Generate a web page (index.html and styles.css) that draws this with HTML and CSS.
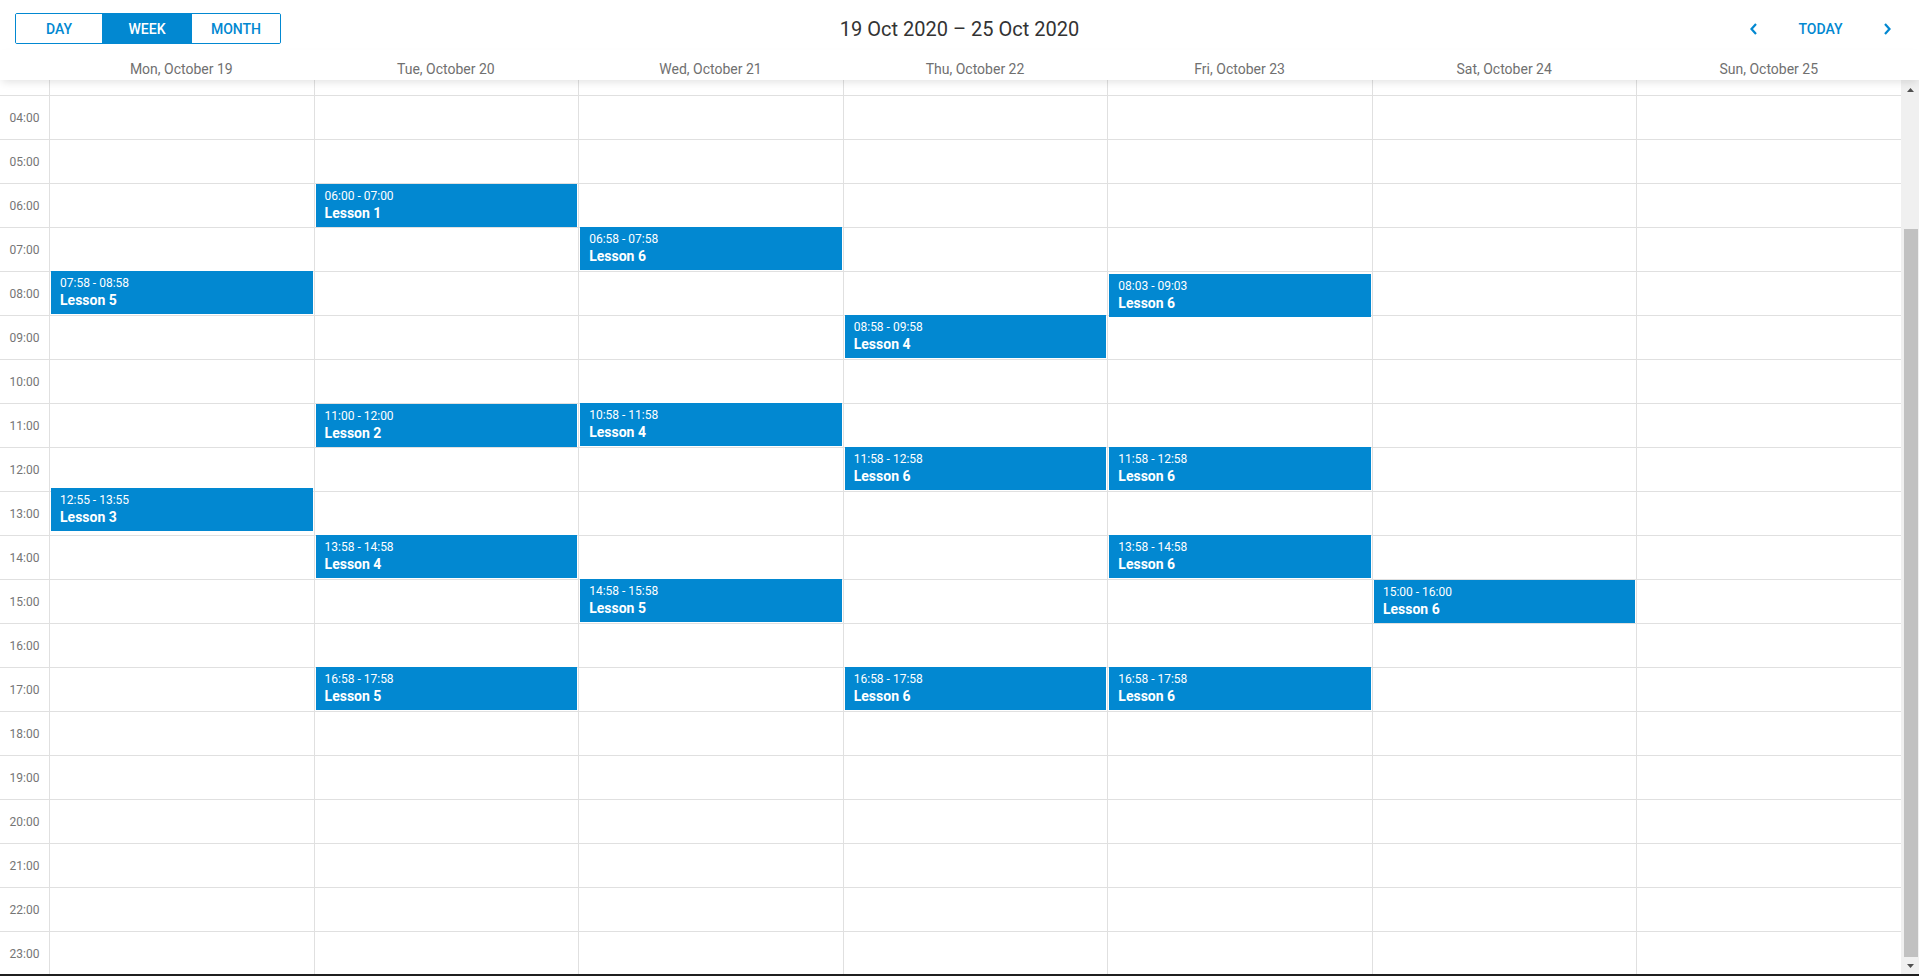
FILE: index.html
```html
<!DOCTYPE html>
<html lang="en">
<head>
<meta charset="utf-8">
<title>Scheduler</title>
<link rel="stylesheet" href="styles.css">
</head>
<body>
<div class="scheduler">
  <div class="toolbar">
    <div class="tb-left">
      <div class="view-switcher">
        <button class="view-btn btn-day">DAY</button>
        <button class="view-btn btn-week active">WEEK</button>
        <button class="view-btn btn-month">MONTH</button>
      </div>
    </div>
    <div class="tb-title">19 Oct 2020 – 25 Oct 2020</div>
    <div class="tb-right">
      <button class="nav-btn" aria-label="Previous"><svg width="10" height="12" viewBox="0 0 10 12"><polyline points="7,1 2.5,6 7,11" fill="none" stroke="#0288d1" stroke-width="2.2"/></svg></button>
      <button class="today-btn">TODAY</button>
      <button class="nav-btn" aria-label="Next"><svg width="10" height="12" viewBox="0 0 10 12"><polyline points="3,1 7.5,6 3,11" fill="none" stroke="#0288d1" stroke-width="2.2"/></svg></button>
    </div>
  </div>

  <div class="header">
    <div class="header-spacer"></div>
    <div class="header-cell">Mon, October 19</div>
    <div class="header-cell">Tue, October 20</div>
    <div class="header-cell">Wed, October 21</div>
    <div class="header-cell">Thu, October 22</div>
    <div class="header-cell">Fri, October 23</div>
    <div class="header-cell">Sat, October 24</div>
    <div class="header-cell">Sun, October 25</div>
    <div class="header-scroll-spacer"></div>
  </div>

  <div class="body">
    <div class="grid">
      <div class="time-col">
        <div class="time-cell partial"></div>
        <div class="time-cell">04:00</div>
        <div class="time-cell">05:00</div>
        <div class="time-cell">06:00</div>
        <div class="time-cell">07:00</div>
        <div class="time-cell">08:00</div>
        <div class="time-cell">09:00</div>
        <div class="time-cell">10:00</div>
        <div class="time-cell">11:00</div>
        <div class="time-cell">12:00</div>
        <div class="time-cell">13:00</div>
        <div class="time-cell">14:00</div>
        <div class="time-cell">15:00</div>
        <div class="time-cell">16:00</div>
        <div class="time-cell">17:00</div>
        <div class="time-cell">18:00</div>
        <div class="time-cell">19:00</div>
        <div class="time-cell">20:00</div>
        <div class="time-cell">21:00</div>
        <div class="time-cell">22:00</div>
        <div class="time-cell">23:00</div>
      </div>

      <div class="day-col">
        <div class="appt" style="top:191px"><div class="appt-time">07:58 - 08:58</div><div class="appt-title">Lesson 5</div></div>
        <div class="appt" style="top:408px"><div class="appt-time">12:55 - 13:55</div><div class="appt-title">Lesson 3</div></div>
      </div>
      <div class="day-col">
        <div class="appt" style="top:104px"><div class="appt-time">06:00 - 07:00</div><div class="appt-title">Lesson 1</div></div>
        <div class="appt" style="top:324px"><div class="appt-time">11:00 - 12:00</div><div class="appt-title">Lesson 2</div></div>
        <div class="appt" style="top:455px"><div class="appt-time">13:58 - 14:58</div><div class="appt-title">Lesson 4</div></div>
        <div class="appt" style="top:587px"><div class="appt-time">16:58 - 17:58</div><div class="appt-title">Lesson 5</div></div>
      </div>
      <div class="day-col">
        <div class="appt" style="top:147px"><div class="appt-time">06:58 - 07:58</div><div class="appt-title">Lesson 6</div></div>
        <div class="appt" style="top:323px"><div class="appt-time">10:58 - 11:58</div><div class="appt-title">Lesson 4</div></div>
        <div class="appt" style="top:499px"><div class="appt-time">14:58 - 15:58</div><div class="appt-title">Lesson 5</div></div>
      </div>
      <div class="day-col">
        <div class="appt" style="top:235px"><div class="appt-time">08:58 - 09:58</div><div class="appt-title">Lesson 4</div></div>
        <div class="appt" style="top:367px"><div class="appt-time">11:58 - 12:58</div><div class="appt-title">Lesson 6</div></div>
        <div class="appt" style="top:587px"><div class="appt-time">16:58 - 17:58</div><div class="appt-title">Lesson 6</div></div>
      </div>
      <div class="day-col">
        <div class="appt" style="top:194px"><div class="appt-time">08:03 - 09:03</div><div class="appt-title">Lesson 6</div></div>
        <div class="appt" style="top:367px"><div class="appt-time">11:58 - 12:58</div><div class="appt-title">Lesson 6</div></div>
        <div class="appt" style="top:455px"><div class="appt-time">13:58 - 14:58</div><div class="appt-title">Lesson 6</div></div>
        <div class="appt" style="top:587px"><div class="appt-time">16:58 - 17:58</div><div class="appt-title">Lesson 6</div></div>
      </div>
      <div class="day-col">
        <div class="appt" style="top:500px"><div class="appt-time">15:00 - 16:00</div><div class="appt-title">Lesson 6</div></div>
      </div>
      <div class="day-col"></div>
    </div>

    <div class="scrollbar">
      <div class="sb-btn sb-up"><svg width="7" height="4" viewBox="0 0 7 4"><polygon points="0,4 3.5,0 7,4" fill="#505050"/></svg></div>
      <div class="sb-track-before"></div>
      <div class="sb-thumb"></div>
      <div class="sb-track-after"></div>
      <div class="sb-btn sb-down"><svg width="7" height="4" viewBox="0 0 7 4"><polygon points="0,0 7,0 3.5,4" fill="#505050"/></svg></div>
    </div>
  </div>
  <div class="bottom-bar"></div>
</div>
</body>
</html>
```

FILE: styles.css
```css
* {
  box-sizing: border-box;
}

html, body {
  margin: 0;
  padding: 0;
  background: #fff;
}

body {
  font-family: Roboto, "Noto Sans", "Liberation Sans", sans-serif;
  color: #333;
  overflow: hidden;
}

.scheduler {
  width: 1919px;
  height: 976px;
  display: flex;
  flex-direction: column;
}

/* toolbar */
.toolbar {
  height: 50px;
  flex: 0 0 50px;
  display: grid;
  grid-template-columns: 1fr auto 1fr;
  align-items: start;
  padding-top: 13px;
}

.tb-left {
  display: flex;
  padding-left: 15px;
}

.view-switcher {
  display: flex;
  height: 31px;
  border: 1px solid #0288d1;
  border-radius: 2px;
  overflow: hidden;
}

.view-btn {
  border: 0;
  margin: 0;
  padding: 0;
  height: 29px;
  background: #fff;
  color: #0288d1;
  font-family: Roboto, "Noto Sans", sans-serif;
  font-size: 14px;
  font-weight: 500;
  letter-spacing: 0;
  cursor: pointer;
}

.btn-day { width: 86px; }
.btn-week { width: 90px; }
.btn-month { width: 88px; }

.view-btn.active {
  background: #0288d1;
  color: #fff;
}

.tb-title {
  font-size: 20px;
  line-height: 24px;
  margin-top: 4px;
  color: #333;
  white-space: nowrap;
}

.tb-right {
  display: flex;
  justify-content: flex-end;
  align-items: center;
  height: 31px;
  padding-right: 14px;
}

.nav-btn {
  width: 36px;
  height: 31px;
  border: 0;
  background: transparent;
  padding: 0;
  display: flex;
  align-items: center;
  justify-content: center;
  cursor: pointer;
}

.today-btn {
  width: 97px;
  height: 31px;
  border: 0;
  background: transparent;
  padding: 0;
  color: #0288d1;
  font-family: Roboto, "Noto Sans", sans-serif;
  font-size: 14px;
  font-weight: 500;
  cursor: pointer;
}

/* header */
.header {
  position: relative;
  z-index: 2;
  height: 30px;
  flex: 0 0 30px;
  display: flex;
  background: #fff;
  box-shadow: 0 4px 8px -2px rgba(0, 0, 0, 0.12);
}

.header-spacer {
  flex: 0 0 49px;
}

.header-scroll-spacer {
  flex: 0 0 18px;
}

.header-cell {
  flex: 1 1 0;
  min-width: 0;
  padding-top: 11px;
  font-size: 14px;
  line-height: 16px;
  color: #707070;
  text-align: center;
  white-space: nowrap;
}

/* body */
.body {
  flex: 0 0 894px;
  height: 894px;
  display: flex;
  overflow: hidden;
}

.grid {
  flex: 1 1 auto;
  display: flex;
  overflow: hidden;
}

.time-col {
  flex: 0 0 49px;
  display: flex;
  flex-direction: column;
}

.time-cell {
  flex: 0 0 44px;
  border-top: 1px solid #e0e0e0;
  display: flex;
  align-items: center;
  justify-content: center;
  font-size: 12px;
  color: #757575;
}

.time-cell.partial {
  flex: 0 0 15px;
  border-top: 0;
}

.day-col {
  position: relative;
  flex: 1 1 0;
  min-width: 0;
  border-left: 1px solid #e0e0e0;
  background-image: linear-gradient(to bottom, #e0e0e0 0, #e0e0e0 1px, transparent 1px);
  background-size: 100% 44px;
  background-position: 0 15px;
  background-repeat: repeat-y;
}

.appt {
  position: absolute;
  left: 1px;
  right: 1px;
  height: 43px;
  background: #0288d1;
  color: #fff;
  padding: 5px 9px 0;
  overflow: hidden;
}

.appt-time {
  font-size: 12px;
  line-height: 14px;
  white-space: nowrap;
}

.appt-title {
  font-size: 14px;
  font-weight: 700;
  line-height: 17px;
  margin-top: 2px;
  white-space: nowrap;
}

/* scrollbar */
.scrollbar {
  flex: 0 0 18px;
  display: flex;
  flex-direction: column;
  background: #f0f0f0;
}

.sb-btn {
  flex: 0 0 17px;
  display: flex;
  justify-content: center;
  padding-left: 1px;
}

.sb-up {
  align-items: flex-start;
  padding-top: 8px;
}

.sb-down {
  align-items: flex-start;
  padding-top: 7px;
}

.sb-track-before {
  flex: 0 0 132px;
}

.sb-thumb {
  flex: 0 0 728px;
  margin: 0 1px 0 3px;
  background: #c1c1c1;
}

.sb-track-after {
  flex: 1 1 auto;
}

.bottom-bar {
  flex: 0 0 2px;
  background: #1f1f1f;
}
```
